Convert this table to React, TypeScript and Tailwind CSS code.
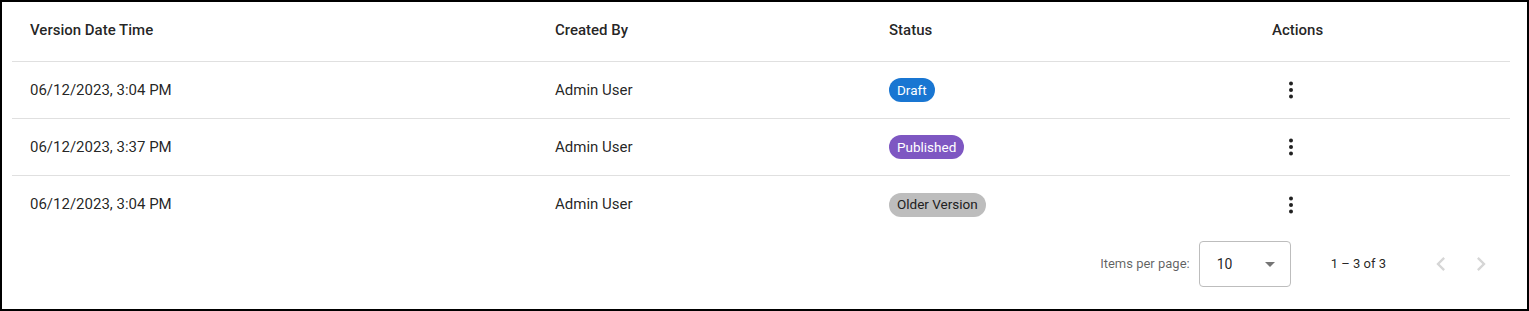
type Row = { date: string; by: string; status: "Draft" | "Published" | "Older Version" }

const rows: Row[] = [
  { date: "06/12/2023, 3:04 PM", by: "Admin User", status: "Draft" },
  { date: "06/12/2023, 3:37 PM", by: "Admin User", status: "Published" },
  { date: "06/12/2023, 3:04 PM", by: "Admin User", status: "Older Version" },
]

const badgeClass: Record<Row["status"], string> = {
  Draft: "bg-[#1976d2] text-white",
  Published: "bg-[#7e57c2] text-white",
  "Older Version": "bg-[#bdbdbd] text-[#212121]",
}

const cols = "grid grid-cols-[525px_334px_383px_1fr]"

function MoreVert() {
  return (
    <button className="w-10 h-10 flex items-center justify-center rounded-full text-[#212121]">
      <svg width="24" height="24" viewBox="0 0 24 24" fill="currentColor">
        <circle cx="12" cy="5.5" r="2" />
        <circle cx="12" cy="12" r="2" />
        <circle cx="12" cy="18.5" r="2" />
      </svg>
    </button>
  )
}

function Chevron({ dir }: { dir: "left" | "right" }) {
  return (
    <button className="w-10 h-10 flex items-center justify-center text-[#d6d6d6]">
      <svg width="28" height="28" viewBox="0 0 24 24" fill="currentColor">
        {dir === "left" ? (
          <path d="M15.41 7.41L14 6l-6 6 6 6 1.41-1.41L10.83 12z" />
        ) : (
          <path d="M10 6L8.59 7.41 13.17 12l-4.58 4.59L10 18l6-6z" />
        )}
      </svg>
    </button>
  )
}

export default function App() {
  return (
    <div className="w-[1529px] h-[311px] border-2 border-black bg-white font-['Roboto',sans-serif] text-[#000000de] pl-[10px] pr-[17px]">
      {/* header */}
      <div className={`${cols} h-[60px] items-center border-b border-[#e0e0e0] text-[15px] font-medium pb-[2px]`}>
        <div className="pl-[18px]">Version Date Time</div>
        <div className="pl-[18px]">Created By</div>
        <div className="pl-[18px]">Status</div>
        <div className="pl-[18px]">Actions</div>
      </div>

      {rows.map((row, i) => (
        <div
          key={i}
          className={`${cols} h-[57px] items-center text-[15px] ${i < rows.length - 1 ? "border-b border-[#e0e0e0]" : ""}`}
        >
          <div className="pl-[18px]">{row.date}</div>
          <div className="pl-[18px]">{row.by}</div>
          <div className="pl-[18px]">
            <span className={`inline-flex items-center h-6 px-2 rounded-full text-[13.5px] ${badgeClass[row.status]}`}>
              {row.status}
            </span>
          </div>
          <div className="pl-[17px]">
            <MoreVert />
          </div>
        </div>
      ))}

      {/* paginator */}
      <div className="flex items-center justify-end h-[62px] pr-[9px] text-[13px] text-[#000000a0]">
        <span className="mr-[9px]">Items per page:</span>
        <div className="w-[92px] h-[46px] border border-[#bdbdbd] rounded flex items-center justify-between pl-[17px] pr-[15px]">
          <span className="text-sm text-[#000000de]">10</span>
          <svg width="10" height="5" viewBox="0 0 10 5" fill="#0000008a">
            <path d="M0 0l5 5 5-5z" />
          </svg>
        </div>
        <span className="ml-10 mr-[35px] text-[#000000de]">1 – 3 of 3</span>
        <Chevron dir="left" />
        <Chevron dir="right" />
      </div>
    </div>
  )
}
